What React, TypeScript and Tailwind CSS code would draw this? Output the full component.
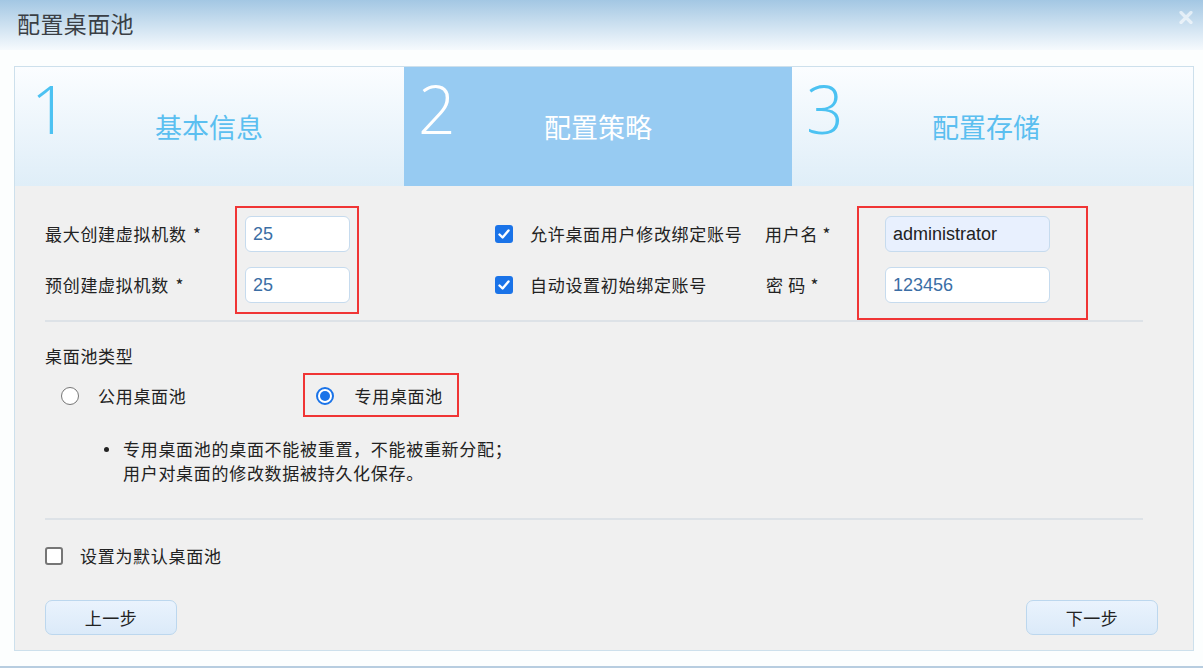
import React from "react";

const CJK = '"Noto Sans CJK SC", "Liberation Sans", sans-serif';
const ARIAL = '"Liberation Sans", sans-serif';

function CheckBox({ checked }: { checked: boolean }) {
  if (checked) {
    return (
      <span className="w-[18px] h-[18px] rounded-[3px] bg-[#1a73e8] flex items-center justify-center shrink-0">
        <svg width="14" height="14" viewBox="0 0 14 14">
          <path d="M2.5 7.5 L5.6 10.5 L11.5 3.5" fill="none" stroke="white" strokeWidth="2.4" strokeLinecap="round" strokeLinejoin="round" />
        </svg>
      </span>
    );
  }
  return <span className="block w-[18px] h-[18px] rounded-[3px] border-2 border-[#767676] bg-white shrink-0" />;
}

function Radio({ checked }: { checked: boolean }) {
  if (checked) {
    return (
      <span className="w-[18px] h-[18px] rounded-full border-2 border-[#1a73e8] bg-white flex items-center justify-center shrink-0">
        <span className="block w-[10px] h-[10px] rounded-full bg-[#1a73e8]" />
      </span>
    );
  }
  return <span className="block w-[18px] h-[18px] rounded-full border border-[#767676] bg-white shrink-0" />;
}

export default function App() {
  return (
    <div
      className="w-[1203px] h-[668px] bg-[#fcfefe] border-b-2 border-[#b7cde0] relative overflow-hidden"
      style={{ fontFamily: CJK }}
    >
      {/* header */}
      <div className="h-[50px] bg-gradient-to-b from-[#a3c7e3] to-[#f6fafd] flex items-center pl-[17px] relative">
        <span className="text-[23px] tracking-[0.4px] text-[#3a3f45] leading-none mt-[-4px]">配置桌面池</span>
        <svg className="absolute left-[1179px] top-[11px]" width="14" height="13" viewBox="0 0 14 13">
          <path d="M2 1.5 L12 11.5 M12 1.5 L2 11.5" stroke="white" strokeOpacity="0.6" strokeWidth="3.2" strokeLinecap="round" />
        </svg>
      </div>

      <div className="pt-[16px] pl-[14px]">
        <div className="w-[1180px] h-[585px] border border-[#cde0ec] bg-[#f0f0f0]">
          {/* steps */}
          <div className="flex h-[119px]">
            <div className="w-[389px] bg-gradient-to-b from-[#fbfdff] to-[#dfeef8] relative">
              <span className="absolute left-[16px] top-[8px] text-[66px] font-light text-[#4cc2f2] leading-none" style={{ fontFamily: '"Open Sans", sans-serif' }}>1</span>
              <span className="absolute left-[140px] top-[40px] text-[27px] text-[#5bbff0]">基本信息</span>
            </div>
            <div className="w-[388px] bg-[#97cbf2] relative">
              <span className="absolute left-[14px] top-[8px] text-[66px] font-light text-white leading-none" style={{ fontFamily: '"Open Sans", sans-serif' }}>2</span>
              <span className="absolute left-[140px] top-[40px] text-[27px] text-white">配置策略</span>
            </div>
            <div className="flex-1 bg-gradient-to-b from-[#fbfdff] to-[#dfeef8] relative">
              <span className="absolute left-[14px] top-[8px] text-[66px] font-light text-[#4cc2f2] leading-none" style={{ fontFamily: '"Open Sans", sans-serif' }}>3</span>
              <span className="absolute left-[140px] top-[40px] text-[27px] text-[#5bbff0]">配置存储</span>
            </div>
          </div>

          {/* form */}
          <div className="pl-[30px] pt-[30px] text-[17px] tracking-[0.7px] text-[#222]">
            <div className="flex relative">
              {/* left column */}
              <div className="flex flex-col gap-[15px] relative">
                <div className="flex items-center h-[36px]">
                  <span className="w-[200px]">最大创建虚拟机数 <span className="ml-[2px]">*</span></span>
                  <div className="w-[105px] h-[36px] rounded-[6px] border border-[#c6dbee] bg-white flex items-center pl-[7px] text-[18px] tracking-normal text-[#3b6ea5]" style={{ fontFamily: ARIAL }}>25</div>
                </div>
                <div className="flex items-center h-[36px]">
                  <span className="w-[200px]">预创建虚拟机数 <span className="ml-[2px]">*</span></span>
                  <div className="w-[105px] h-[36px] rounded-[6px] border border-[#c6dbee] bg-white flex items-center pl-[7px] text-[18px] tracking-normal text-[#3b6ea5]" style={{ fontFamily: ARIAL }}>25</div>
                </div>
                <div className="absolute left-[190px] top-[-10px] w-[124px] h-[108px] border-2 border-[#f03535]" />
              </div>

              {/* checkboxes */}
              <div className="flex flex-col gap-[15px] ml-[145px]">
                <div className="flex items-center h-[36px]">
                  <CheckBox checked />
                  <span className="ml-[17px] w-[235px] whitespace-nowrap">允许桌面用户修改绑定账号</span>
                  <span className="w-[120px]">用户名 *</span>
                </div>
                <div className="flex items-center h-[36px]">
                  <CheckBox checked />
                  <span className="ml-[17px] w-[235px] whitespace-nowrap">自动设置初始绑定账号</span>
                  <span className="w-[120px] pl-[1px]">密 码 *</span>
                </div>
              </div>

              {/* username/password */}
              <div className="flex flex-col gap-[15px] relative">
                <div className="w-[165px] h-[36px] rounded-[6px] border border-[#c6dbee] bg-[#e8f0fe] flex items-center pl-[7px] text-[18px] tracking-normal text-[#222]" style={{ fontFamily: ARIAL }}>administrator</div>
                <div className="w-[165px] h-[36px] rounded-[6px] border border-[#c6dbee] bg-white flex items-center pl-[7px] text-[18px] tracking-normal text-[#3b6ea5]" style={{ fontFamily: ARIAL }}>123456</div>
                <div className="absolute left-[-28px] top-[-10px] w-[231px] h-[114px] border-2 border-[#f03535]" />
              </div>
            </div>

            <div className="w-[1098px] h-[2px] bg-[#dde2e7] mt-[17px]" />

            <div className="mt-[22px] leading-[24px]">桌面池类型</div>

            <div className="flex items-center mt-[11px] h-[34px] relative">
              <span className="ml-[16px]"><Radio checked={false} /></span>
              <span className="ml-[19px]">公用桌面池</span>
              <span className="ml-[129px]"><Radio checked /></span>
              <span className="ml-[21px]">专用桌面池</span>
              <div className="absolute left-[258px] top-[-6px] w-[156px] h-[44px] border-2 border-[#f03535]" />
            </div>

            <div className="flex mt-[24px] leading-[24px]">
              <span className="ml-[59px] w-[19px] flex pt-[10px]"><span className="block w-[5px] h-[5px] rounded-full bg-[#222]" /></span>
              <div>
                <div>专用桌面池的桌面不能被重置，不能被重新分配；</div>
                <div>用户对桌面的修改数据被持久化保存。</div>
              </div>
            </div>

            <div className="w-[1098px] h-[2px] bg-[#dde2e7] mt-[33px]" />

            <div className="flex items-center mt-[26px] h-[20px]">
              <CheckBox checked={false} />
              <span className="ml-[17px]">设置为默认桌面池</span>
            </div>

            <div className="flex justify-between w-[1113px] mt-[34px]">
              <button className="w-[132px] h-[35px] rounded-[7px] border border-[#bcd7ee] bg-gradient-to-b from-[#eaf3fd] to-[#dbeaf9] text-[17px] tracking-[0.5px] text-[#222]">上一步</button>
              <button className="w-[132px] h-[35px] rounded-[7px] border border-[#bcd7ee] bg-gradient-to-b from-[#eaf3fd] to-[#dbeaf9] text-[17px] tracking-[0.5px] text-[#222]">下一步</button>
            </div>
          </div>
        </div>
      </div>
    </div>
  );
}
